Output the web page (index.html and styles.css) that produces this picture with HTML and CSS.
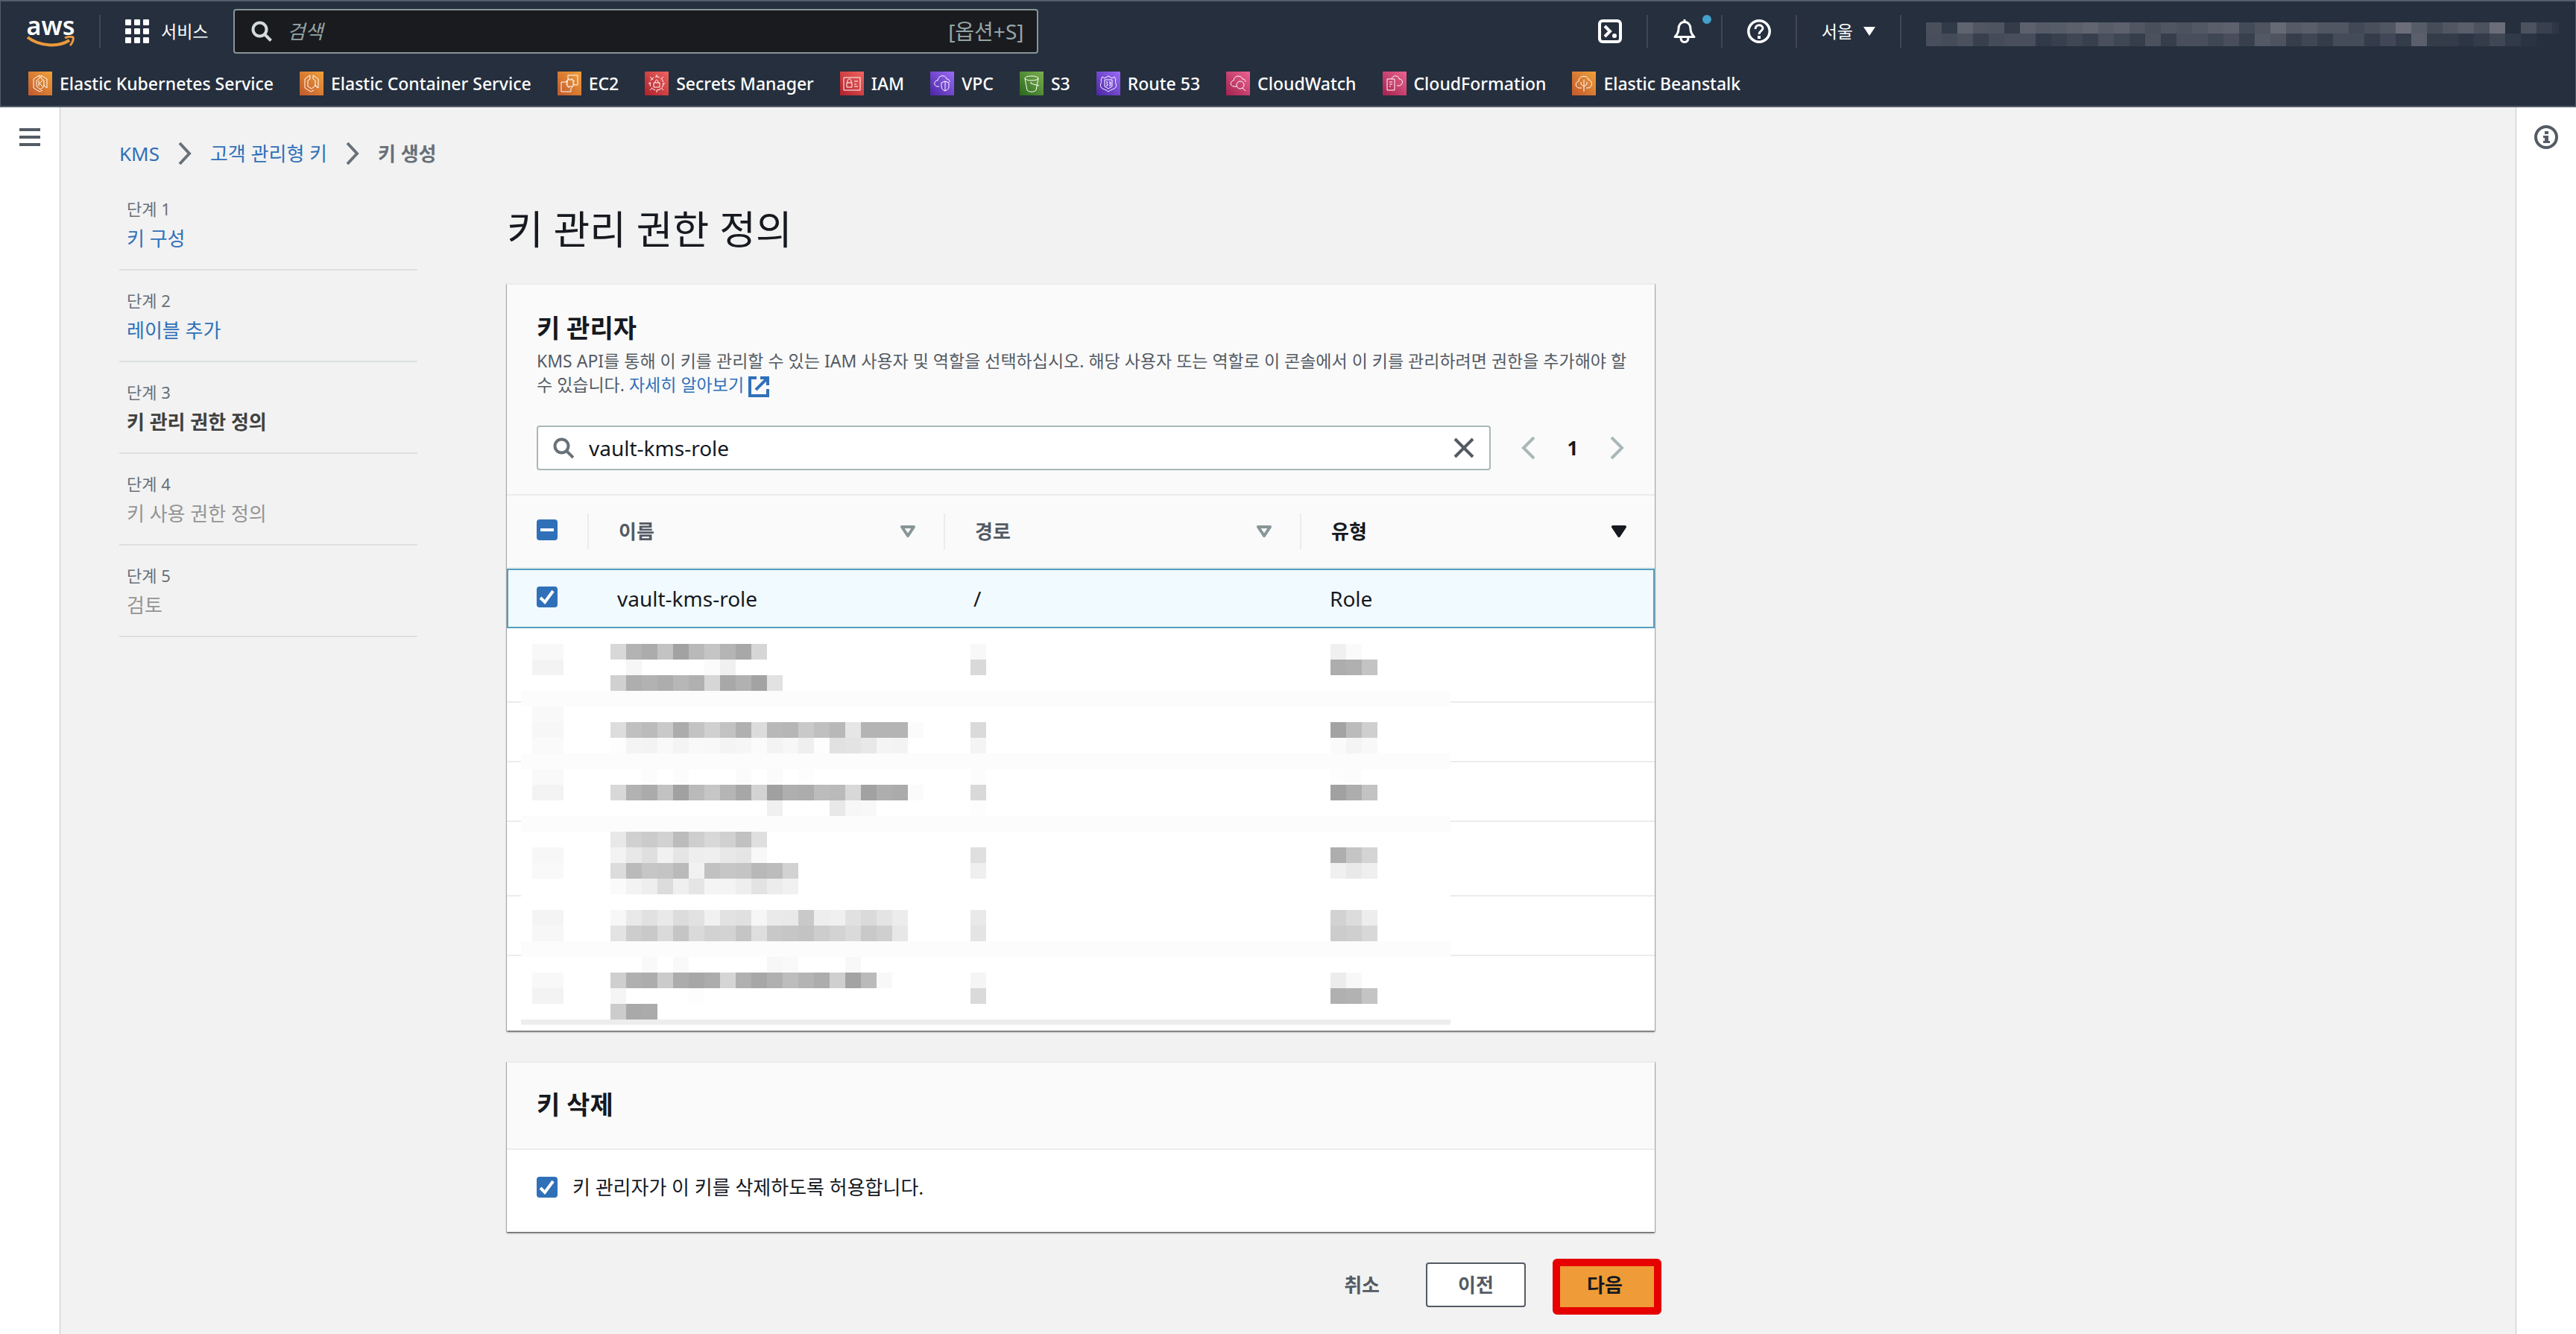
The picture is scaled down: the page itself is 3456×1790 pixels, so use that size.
FILE: index.html
```html
<!DOCTYPE html>
<html lang="ko">
<head>
<meta charset="utf-8">
<meta name="viewport" content="width=device-width, initial-scale=1">
<title>키 생성 - KMS</title>
<link rel="stylesheet" href="styles.css">
</head>
<body>
<header class="topbar">
  <div class="topbar-main">
    <a class="logo" href="#" aria-label="AWS">
      <span class="logo-text">aws</span>
      <svg viewBox="0 0 64 16" width="64" height="16"><path d="M1 2C17 14 42 16 57 6" fill="none" stroke="#ec9a3a" stroke-width="4"/><path d="M51 3c4-2 9-2 11-1 1 3-1 8-4 11" fill="none" stroke="#ec9a3a" stroke-width="3"/></svg>
    </a>
    <span class="rule"></span>
    <button class="services" type="button">
      <svg viewBox="0 0 32 32" width="32" height="32" fill="#fff"><rect width="8" height="8" rx="1"/><rect x="12" width="8" height="8" rx="1"/><rect x="24" width="8" height="8" rx="1"/><rect y="12" width="8" height="8" rx="1"/><rect x="12" y="12" width="8" height="8" rx="1"/><rect x="24" y="12" width="8" height="8" rx="1"/><rect y="24" width="8" height="8" rx="1"/><rect x="12" y="24" width="8" height="8" rx="1"/><rect x="24" y="24" width="8" height="8" rx="1"/></svg>
      <span>서비스</span>
    </button>
    <label class="global-search">
      <svg viewBox="0 0 28 28" width="28" height="28" fill="none" stroke="#d5dbdb" stroke-width="4"><circle cx="11.500" cy="11.500" r="9"/><path d="M18 18l8.500 8.500"/></svg>
      <input type="text" placeholder="검색" aria-label="검색">
      <span class="shortcut">[옵션+S]</span>
    </label>
    <div class="tools">
      <button class="tool" type="button" aria-label="CloudShell"><svg viewBox="0 0 32 32" width="32" height="32" fill="none" stroke="#fff" stroke-width="4"><rect x="2" y="2" width="28" height="28" rx="4"/><path d="M9 9l7 7-7 7"/><circle cx="22" cy="22" r="1.500" stroke-width="3"/></svg></button>
      <button class="tool" type="button" aria-label="알림"><svg viewBox="0 0 32 32" width="32" height="32" fill="none" stroke="#fff" stroke-width="3"><path d="M16 0v4M3 23.500h26c-4-4-5-7-5-11 0-5-3-9-8-9s-8 4-8 9c0 4-1 7-5 11z" stroke-linejoin="round"/><path d="M11 24c0 4 1 6.500 5 6.500s5-2.500 5-6.500"/></svg><span class="dot"></span></button>
      <button class="tool" type="button" aria-label="도움말"><svg viewBox="0 0 32 32" width="32" height="32" fill="none" stroke="#fff"><circle cx="16" cy="16" r="14.200" stroke-width="3.500"/><path d="M11 13c0-7 10-6.500 10-1 0 3.500-5 3.500-5 8" stroke-width="3"/><path d="M16 22v4" stroke-width="4"/></svg></button>
      <button class="tool region" type="button"><span>서울</span><svg viewBox="0 0 16 12" width="16" height="12"><path d="M0 0h16L8 12z" fill="#fff"/></svg></button>
      <div class="tool account"><svg id="account" viewBox="0 0 849 40" width="849" height="40" aria-hidden="true"></svg></div>
    </div>
  </div>
  <nav class="favorites" aria-label="즐겨찾기">
    <a href="#"><svg class="svc orange" viewBox="0 0 32 32"><path d="M15 5l-8 5v12l8 5 4-2M17 5l8 5v12l-5-4M15 9l-4 3v8l5 4 5-4v-8l-4-3V5M15 5v4"/><path d="M14 12v8M19 12l-4 4 4 4"/></svg>Elastic Kubernetes Service</a>
    <a href="#"><svg class="svc orange" viewBox="0 0 32 32"><path d="M14 5l-7 5v12l8 5 4-2M18 5l7 5v12l-5-4M14 5v5l-3 2v8l5 3 5-4v-7l-3-2V5M21 19l4 3"/></svg>Elastic Container Service</a>
    <a href="#"><svg class="svc orange" viewBox="0 0 32 32"><path d="M14 10V5h13v13h-5M14 14H5v13h13v-5"/><path d="M13 11h8v9h-8zM15 9v2M19 9v2M15 20v2M19 20v2M11 13h2M11 17h2M21 13h2M21 17h2"/></svg>EC2</a>
    <a href="#"><svg class="svc red" viewBox="0 0 32 32"><circle cx="16" cy="16" r="9" stroke-dasharray="6 2"/><path d="M12 15h8v6h-8zM14 15c0-5 4-5 4 0M16 4v3M16 25v3M5 16h3M24 16h3M7 7l4 4M25 7l-3 3M7 25l3-3M25 25l-3-3"/></svg>Secrets Manager</a>
    <a href="#"><svg class="svc red" viewBox="0 0 32 32"><path d="M5 8h22v17H5zM9 15h7v6H9zM10 15v-2c0-4 5-4 5 0v2M19 13h5M19 17h3M19 20h5"/></svg>IAM</a>
    <a href="#"><svg class="svc purple" viewBox="0 0 32 32"><path d="M12 20H9c-5-1-4-8 1-8 1-8 11-8 12-2 3 0 4 2 4 4"/><path d="M15 15l5-2 5 2v5c0 3-2 5-5 6-3-1-5-3-5-6zM20 13v13"/></svg>VPC</a>
    <a href="#"><svg class="svc green" viewBox="0 0 32 32"><ellipse cx="16" cy="9" rx="9" ry="3"/><path d="M7 9l3 16c3 3 9 3 12 0l3-16M15 16l11 3M14 15h2"/></svg>S3</a>
    <a href="#"><svg class="svc purple" viewBox="0 0 32 32"><path d="M8 7l3 2 5-3 5 3 3-2 2 4c-2 3 2 6 0 10-2 3-7 3-10 6-3-3-8-3-10-6-2-4 2-7 0-10z"/><path d="M11 11h10v9l-5 3-5-3zM13 14h2l-1 2 1 3h-2M17 14h2v5h-2M17 16h2"/></svg>Route 53</a>
    <a href="#"><svg class="svc pink" viewBox="0 0 32 32"><path d="M14 20h-4c-5-1-5-7 0-8 1-8 11-7 12-2 3 0 4 2 4 4"/><circle cx="19" cy="18" r="5"/><path d="M22 22l4 4"/></svg>CloudWatch</a>
    <a href="#"><svg class="svc pink" viewBox="0 0 32 32"><path d="M6 10h10v15H6zM9 14h4M9 17h4M9 20h2M12 10c1-6 10-5 10 0 6 0 6 8 0 9h-3"/></svg>CloudFormation</a>
    <a href="#"><svg class="svc orange" viewBox="0 0 32 32"><path d="M13 22H9c-5-1-5-8 0-9 0-8 12-9 13-2 6 1 6 10 0 11h-3M16 11v16M16 20l-4-3v-3M16 20l4-3v-3"/></svg>Elastic Beanstalk</a>
  </nav>
</header>

<div class="shell">
  <aside class="rail rail-left">
    <button type="button" aria-label="메뉴 열기"><svg viewBox="0 0 28 24" width="28" height="24" fill="#545b64"><path d="M0 0h28v4H0zM0 10h28v4H0zM0 20h28v4H0z"/></svg></button>
  </aside>

  <main class="content">
    <nav class="crumbs" aria-label="경로">
      <a href="#">KMS</a>
      <svg viewBox="0 0 18 32" width="18" height="32"><path d="M2 2l13 14L2 30"/></svg>
      <a href="#">고객 관리형 키</a>
      <svg viewBox="0 0 18 32" width="18" height="32"><path d="M2 2l13 14L2 30"/></svg>
      <span>키 생성</span>
    </nav>

    <div class="wizard">
      <ol class="steps">
        <li><small>단계 1</small><a href="#">키 구성</a></li>
        <li><small>단계 2</small><a href="#">레이블 추가</a></li>
        <li><small>단계 3</small><strong>키 관리 권한 정의</strong></li>
        <li><small>단계 4</small><span>키 사용 권한 정의</span></li>
        <li><small>단계 5</small><span>검토</span></li>
      </ol>

      <form class="form">
        <h1>키 관리 권한 정의</h1>

        <section class="card">
          <div class="card-head admins-head">
            <h2>키 관리자</h2>
            <p class="desc">KMS API를 통해 이 키를 관리할 수 있는 IAM 사용자 및 역할을 선택하십시오. 해당 사용자 또는 역할로 이 콘솔에서 이 키를 관리하려면 권한을 추가해야 할 수 있습니다. <a href="#">자세히 알아보기 <svg viewBox="0 0 28 28" width="28" height="28" fill="none" stroke="#3070b8" stroke-width="4"><path d="M11 2H2v24h24v-9M16 2h10v10M25 3L10 18"/></svg></a></p>
            <div class="filter">
              <div class="filter-box">
                <svg viewBox="0 0 28 28" width="28" height="28" fill="none" stroke="#687078" stroke-width="4"><circle cx="11.500" cy="11.500" r="9"/><path d="M18 18l9 9"/></svg>
                <input type="text" value="vault-kms-role" aria-label="키 관리자 검색">
                <button type="button" aria-label="지우기"><svg viewBox="0 0 28 28" width="28" height="28" stroke="#545b64" stroke-width="4"><path d="M2 2l24 24M26 2L2 26"/></svg></button>
              </div>
              <div class="pager">
                <button type="button" aria-label="이전 페이지"><svg viewBox="0 0 20 32" width="20" height="32"><path d="M18 2L4 16l14 14"/></svg></button>
                <b>1</b>
                <button type="button" aria-label="다음 페이지"><svg viewBox="0 0 20 32" width="20" height="32"><path d="M2 2l14 14L2 30"/></svg></button>
              </div>
            </div>
          </div>

          <div class="table-wrap">
            <table>
              <colgroup><col class="col-check"><col class="col-text"><col class="col-text"><col></colgroup>
              <thead>
                <tr>
                  <th><div class="th check-th"><input class="check mixed" type="checkbox" aria-label="모두 선택"></div></th>
                  <th><div class="th">이름<svg class="sort" viewBox="0 0 20 16"><path d="M2 2h16l-8 12z"/></svg></div></th>
                  <th><div class="th">경로<svg class="sort" viewBox="0 0 20 16"><path d="M2 2h16l-8 12z"/></svg></div></th>
                  <th><div class="th sorted">유형<svg class="sort" viewBox="0 0 20 16"><path d="M2 2h16l-8 12z"/></svg></div></th>
                </tr>
              </thead>
              <tbody>
                <tr class="selected"><td><input class="check" type="checkbox" checked aria-label="vault-kms-role 선택"></td><td>vault-kms-role</td><td>/</td><td>Role</td></tr>
                <tr class="tall"><td></td><td></td><td></td><td></td></tr>
                <tr><td></td><td></td><td></td><td></td></tr>
                <tr><td></td><td></td><td></td><td></td></tr>
                <tr class="tall"><td></td><td></td><td></td><td></td></tr>
                <tr><td></td><td></td><td></td><td></td></tr>
                <tr class="tall"><td></td><td></td><td></td><td></td></tr>
              </tbody>
            </table>
            <svg id="redacted" class="redacted" viewBox="0 0 1247 532" width="1247" height="532" aria-hidden="true"></svg>
          </div>
        </section>

        <section class="card">
          <div class="card-head delete-head"><h2>키 삭제</h2></div>
          <label class="allow"><input class="check" type="checkbox" checked><span>키 관리자가 이 키를 삭제하도록 허용합니다.</span></label>
        </section>

        <div class="actions">
          <button class="btn btn-link" type="button">취소</button>
          <button class="btn btn-normal" type="button">이전</button>
          <button class="btn btn-primary" type="submit">다음</button>
        </div>
      </form>
    </div>
  </main>

  <aside class="rail rail-right">
    <button type="button" aria-label="정보"><svg viewBox="0 0 32 32" width="32" height="32"><circle cx="16" cy="16" r="14" fill="none" stroke="#545b64" stroke-width="4"/><path d="M14 8h5v4h-5zM12 14h7v7h2v3h-9v-3h2v-4h-2z" fill="#545b64"/></svg></button>
  </aside>
</div>
<script src="mosaic.js"></script>
</body>
</html>
```
FILE: styles.css
```css
* { box-sizing: border-box; }

body {
  margin: 0;
  min-height: 100vh;
  display: flex;
  flex-direction: column;
  background: #f2f2f2;
  color: #16191f;
  font-family: "Noto Sans", "Noto Sans CJK KR", sans-serif;
  font-size: 26px;
  line-height: 40px;
}

button, input { font: inherit; color: inherit; }
button { padding: 0; border: 0; background: none; cursor: pointer; }
a { color: #3070b8; text-decoration: none; }
svg { display: block; flex: none; }
h1, h2, p { margin: 0; }

/* Top navigation */
.topbar {
  background: #252f3e;
  border: 2px solid #545d68;
  border-width: 2px 1px;
  color: #fff;
}
.topbar-main {
  display: flex;
  align-items: center;
  height: 80px;
  padding: 0 22px 0 35px;
  font-size: 23px;
}
.logo { display: flex; flex-direction: column; align-items: center; width: 64px; }
.logo-text { color: #fff; font-size: 34px; font-weight: 600; line-height: 28px; }
.rule { width: 2px; height: 44px; margin: 0 33px; background: #414750; }
.services { display: flex; align-items: center; gap: 16px; white-space: nowrap; }
.global-search {
  display: flex;
  align-items: center;
  flex: 0 1 1080px;
  min-width: 0;
  height: 60px;
  margin-left: 34px;
  padding: 0 18px 0 22px;
  gap: 20px;
  border: 2px solid #879596;
  border-radius: 4px;
  background: #1a1b1f;
  color: #95a5a6;
}
.global-search input {
  flex: 1;
  min-width: 0;
  padding: 0;
  border: 0;
  outline: 0;
  background: none;
  font-size: 26px;
}
.global-search input::placeholder { color: #95a5a6; font-style: italic; opacity: 1; }
.shortcut { font-size: 28px; }
.tools { display: flex; align-items: center; margin-left: auto; }
.tool {
  position: relative;
  display: flex;
  align-items: center;
  height: 44px;
  padding: 0 33px;
  border-left: 2px solid #414750;
  white-space: nowrap;
}
.tool:first-child { border-left: 0; }
.region { gap: 14px; }
.account { padding-right: 0; }
.dot {
  position: absolute;
  top: 0;
  right: 13px;
  width: 12px;
  height: 12px;
  border-radius: 50%;
  background: #44a0cc;
}
.favorites {
  display: flex;
  align-items: center;
  gap: 35px;
  height: 60px;
  padding-left: 37px;
  font-size: 23px;
  font-weight: 500;
  white-space: nowrap;
}
.favorites a { display: flex; align-items: center; gap: 10px; color: #fff; }
.svc { width: 32px; height: 32px; fill: none; stroke: #fff; stroke-width: 1; }
.orange { background: linear-gradient(45deg, #c2592b, #f0a03a); }
.red { background: linear-gradient(45deg, #b0202a, #ee6560); }
.purple { background: linear-gradient(45deg, #4a25a4, #9c6cf8); }
.green { background: linear-gradient(45deg, #2a681e, #7bb04e); }
.pink { background: linear-gradient(45deg, #a5224e, #ec6491); }

/* Page frame */
.shell { display: flex; flex: 1; }
.rail { flex: none; width: 81px; padding-top: 24px; background: #fff; border: 0 solid #c4cacd; }
.rail-left { padding-left: 26px; padding-top: 28px; border-right-width: 1px; }
.rail-right { padding-left: 24px; border-left-width: 1px; }
.rail button { display: block; }
.content { flex: 1; min-width: 0; padding: 42px 79px 36px; }

.crumbs { display: flex; align-items: center; gap: 25px; margin-bottom: 14px; }
.crumbs svg, .pager svg { fill: none; stroke: #687078; stroke-width: 4; }
.crumbs span { color: #687078; font-weight: 700; }

.wizard {
  display: grid;
  grid-template-columns: 400px minmax(0, 1fr);
  gap: 120px;
  max-width: 2060px;
}

/* Wizard steps */
.steps { margin: 0; padding: 0; list-style: none; }
.steps li {
  display: flex;
  flex-direction: column;
  padding: 22px 10px 19px;
  border-bottom: 2px solid #dddfe0;
  color: #959595;
  line-height: 44px;
}
.steps small { color: #687078; font-size: 22px; line-height: 36px; }
.steps strong { color: #414141; }

/* Form */
h1 { padding-top: 32px; margin-bottom: 36px; font-size: 53px; font-weight: 400; line-height: 72px; }
h2 { font-size: 34px; font-weight: 700; line-height: 40px; }
.card {
  margin-bottom: 41px;
  border-top: 2px solid #eaeded;
  background: #fff;
  box-shadow: 0 2px 2px #00000066, 1px 1px 1px #00000033, -1px 1px 1px #00000033;
}
.card-head { background: #fafafa; border-bottom: 2px solid #eaeded; }
.admins-head { padding: 38px 40px 32px; }
.delete-head { padding: 36px 40px 39px; }
.desc { margin: 8px -16px 39px 0; color: #545b64; font-size: 23px; line-height: 32px; word-break: keep-all; }
.desc svg { display: inline; margin: -8px 0; vertical-align: baseline; }

.filter { display: flex; align-items: center; }
.filter-box {
  display: flex;
  align-items: center;
  flex: 1;
  height: 60px;
  padding: 0 20px;
  gap: 20px;
  border: 2px solid #aab7b8;
  border-radius: 4px;
  background: #fff;
}
.filter-box input { flex: 1; min-width: 0; padding: 0; border: 0; outline: 0; background: none; font-size: 28px; }
.pager { display: flex; align-items: center; justify-content: space-between; width: 180px; padding-left: 40px; }
.pager svg { stroke: #aab7b8; }

.table-wrap { position: relative; }
table { width: 100%; table-layout: fixed; border-collapse: separate; border-spacing: 0; }
.col-check { width: 110px; }
.col-text { width: 478px; }
th { height: 98px; padding: 0; border-bottom: 2px solid #eaeded; background: #fafafa; }
.th {
  display: flex;
  align-items: center;
  justify-content: space-between;
  height: 48px;
  padding: 0 38px 0 40px;
  border-right: 2px solid #eaeded;
  color: #545b64;
}
.check-th { padding-right: 0; }
.sorted { border-right: 0; color: #16191f; }
.sort { width: 20px; height: 16px; fill: none; stroke: #879596; stroke-width: 4; stroke-linejoin: round; }
.sorted .sort { fill: #16191f; stroke: #16191f; }
td { height: 80px; padding: 0 40px 0 38px; border-bottom: 2px solid #eaeded; font-size: 28px; }
.tall td { height: 100px; }
tbody tr:last-child td { border-bottom: 0; }
.selected td { background: #f1faff; border: 2px solid #539fbf; border-width: 2px 0; }
.selected td:first-child { border-left-width: 2px; }
.selected td:last-child { border-right-width: 2px; }
.redacted { position: absolute; left: 19px; top: 178px; }

.check {
  appearance: none;
  display: block;
  flex: none;
  width: 28px;
  height: 28px;
  margin: 0;
  border-radius: 4px;
  background: #3070b8 url("data:image/svg+xml,%3Csvg xmlns='http://www.w3.org/2000/svg' viewBox='0 0 28 28'%3E%3Cpath d='M5 15l6 6L22 6' fill='none' stroke='white' stroke-width='4'/%3E%3C/svg%3E");
}
table .check { margin-bottom: 4px; }
.mixed {
  background-image: url("data:image/svg+xml,%3Csvg xmlns='http://www.w3.org/2000/svg' viewBox='0 0 28 28'%3E%3Cpath d='M5 14h18' stroke='white' stroke-width='4'/%3E%3C/svg%3E");
}

.allow { display: flex; align-items: center; gap: 20px; height: 110px; padding: 0 40px 10px; }

/* Buttons */
.actions { display: flex; align-items: center; justify-content: flex-end; height: 60px; }
.btn { height: 60px; font-weight: 700; color: #545b64; }
.btn-link { margin-right: 62px; }
.btn-normal { width: 134px; margin-right: 39px; border: 2px solid #545b64; border-radius: 4px; background: #fff; }
.btn-primary { position: relative; width: 134px; background: #ef9b37; color: #16191f; }
/* Red highlight frame laid over the button */
.btn-primary::after {
  content: "";
  position: absolute;
  inset: -5px -9px -10px -3px;
  border: 10px solid #e60000;
  border-radius: 6px;
}
```
FILE: mosaic.js
```js
// Draws pixelated blocks over values that must not be shown.
const NS = "http://www.w3.org/2000/svg";
const CELL = 21;

function block(svg, x, y, width, height, fill) {
  const rect = document.createElementNS(NS, "rect");
  Object.entries({ x, y, width, height, fill }).forEach(([k, v]) => rect.setAttribute(k, v));
  svg.append(rect);
}

const table = document.getElementById("redacted");
block(table, 0, 0, 1247, 532, "#fff");
[4, 8, 12, 20].forEach(row => block(table, 0, row * CELL, 1247, CELL, "#fcfcfc"));
block(table, 0, 525, 1247, 7, "#ededed");

// Left edge of each column, and its rows of grey levels.
const columns = [
  [15, {
    1: "f8f8", 2: "f3f3", 5: "f9f9", 6: "f7f7", 7: "fafa", 9: "f9f9", 10: "f3f3",
    14: "f7f7", 15: "f9f9", 18: "f4f4", 19: "f7f7", 22: "f8f8", 23: "f3f3"
  }],
  [120, {
    1: "d8b3acc3a2b9c5b4a8d6",
    2: "fff6fffffffffbf0",
    3: "d0aeb2adb7b0d6a8b1a3e2",
    6: "ddc0bbc9acc3d0c2b0dcb8b6c9c0b8e6b4b4b4fb",
    7: "fdf4f3f9f4f9f8f4f6fbf3f7effde1e3e8f4f3",
    9: "fffffcfffcfffffffbfffbfffd",
    10: "d8b2abc2a1bac6b5a7d3a0afacbcbad8a2aeabfb",
    11: "fffffffffffffffffffff0ffffffe8f7f8",
    13: "e8d0cbd2bcced8d0c1df",
    14: "f3e8dff1e5eeefe8e5f8",
    15: "dcbac6c4baf1c1c6c4b8bcd2",
    16: "faf3eedcefe5f4f4eee3ecf1",
    18: "f7e9e1e9dce2f1e2e0f6eae9c9eef0e1dae4ec",
    19: "e3cdc9dac5dad2d3c5dec8c6c3cdd3dac9cfe7",
    21: "fffff9fff9fffffffffff7f9fffffff8",
    22: "cfb0adcbaca7acd5b0a7b0bdb4adcfa3baf8",
    23: "f5fffffffffd",
    24: "cca9ab"
  }],
  [603, {
    1: "f8", 2: "d9", 6: "da", 7: "f4", 9: "fc", 10: "d9", 11: "fd",
    14: "df", 15: "ef", 18: "e9", 19: "e4", 22: "f5", 23: "da"
  }],
  [1086, {
    1: "f0fa", 2: "adb0c3", 6: "a3bbcf", 7: "faf4f8", 9: "fdfc", 10: "a1adc3",
    14: "aec5d4", 15: "f0e9ef", 18: "d2dced", 19: "cccfd8", 22: "ecf8", 23: "b0b2c4"
  }]
];

columns.forEach(([left, rows]) => {
  Object.entries(rows).forEach(([row, levels]) => {
    levels.match(/../g).forEach((g, i) => {
      if (g !== "ff") block(table, left + i * CELL, row * CELL, CELL, CELL, "#" + g + g + g);
    });
  });
});

// Account name in the top bar: opacity of white, in percent, for each cell.
const account = document.getElementById("account");
const upper = [17, 6, 27, 20, 19, 7, 26, 22, 23, 25, 28, 23, 26, 20, 17, 20, 18, 21, 24, 26, 14, 19, 30, 22, 24, 20, 20, 13, 17, 20, 32, 23, 15, 20, 24, 18, 32, 0, 18, 9, 4];
const lower = [16, 15, 18, 9, 15, 16, 16, 6, 9, 12, 9, 17, 12, 8, 18, 8, 16, 16, 12, 16, 9, 22, 19, 8, 12, 7, 15, 15, 7, 13, 7, 25, 7, 7, 4, 7, 12, 6, 2, 0];
upper.forEach((p, i) => block(account, i * CELL, 8, CELL, 15, `rgb(255 245 245 / ${p}%)`));
lower.forEach((p, i) => block(account, i * CELL, 23, CELL, 17, `rgb(255 240 245 / ${p}%)`));
```
